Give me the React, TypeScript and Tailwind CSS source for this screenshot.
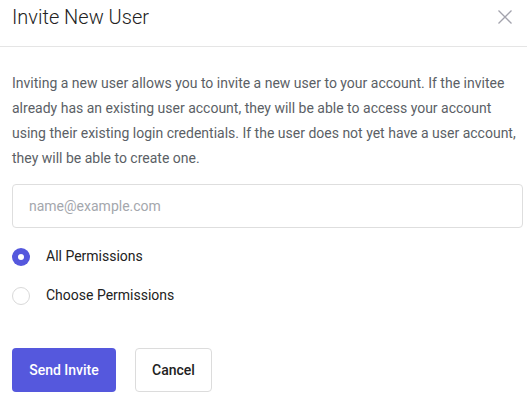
import { useState } from 'react';

const App = () => {
  const [perm, setPerm] = useState<'all' | 'choose'>('all');

  return (
    <div className="w-[527px] h-[411px] bg-white font-['Roboto',sans-serif] overflow-hidden">
      <div className="flex items-center justify-between h-[47px] pb-[13px] pl-3 pr-[14px] border-b border-[#e5e5e5]">
        <h2 className="text-[20px] font-light text-[#222] leading-none">Invite New User</h2>
        <button className="text-[#a3a3ad]" aria-label="Close">
          <svg width="16" height="16" viewBox="0 0 16 16" fill="none" stroke="currentColor" strokeWidth="1.3">
            <path d="M1.5 1.5l13 13M14.5 1.5l-13 13" />
          </svg>
        </button>
      </div>

      <div className="pl-3 pr-1 pt-[24px]">
        <p className="text-[14px] leading-[25px] text-[#5b5f66]">
          Inviting a new user allows you to invite a new user to your account. If the invitee already has an existing user account, they will be able to access your account using their existing login credentials. If the user does not yet have a user account, they will be able to create one.
        </p>

        <input
          type="email"
          placeholder="name@example.com"
          className="mt-[13px] block w-[511px] h-[44px] px-4 border border-[#dedede] rounded-[4px] text-[14px] placeholder-[#a4a7ad] focus:outline-none"
        />

        <div className="mt-[9px] flex flex-col">
          <label className="flex items-center h-[39px] cursor-pointer" onClick={() => setPerm('all')}>
            {perm === 'all' ? (
              <span className="w-[18px] h-[18px] rounded-full bg-[#5558dd] flex items-center justify-center">
                <span className="w-[6px] h-[6px] rounded-full bg-white" />
              </span>
            ) : (
              <span className="w-[18px] h-[18px] rounded-full border border-[#d9d9d9]" />
            )}
            <span className="ml-[16px] text-[14px] text-[#222]">All Permissions</span>
          </label>
          <label className="flex items-center h-[39px] cursor-pointer" onClick={() => setPerm('choose')}>
            {perm === 'choose' ? (
              <span className="w-[18px] h-[18px] rounded-full bg-[#5558dd] flex items-center justify-center">
                <span className="w-[6px] h-[6px] rounded-full bg-white" />
              </span>
            ) : (
              <span className="w-[18px] h-[18px] rounded-full border border-[#d9d9d9]" />
            )}
            <span className="ml-[16px] text-[14px] text-[#222]">Choose Permissions</span>
          </label>
        </div>

        <div className="mt-[33px] flex gap-[19px]">
          <button className="w-[104px] h-[44px] rounded-[4px] bg-[#5558dd] text-white text-[14px] font-medium">
            Send Invite
          </button>
          <button className="w-[77px] h-[44px] rounded-[4px] border border-[#dcdcdc] bg-white text-[#222] text-[14px] font-medium">
            Cancel
          </button>
        </div>
      </div>
    </div>
  );
};

export default App;
